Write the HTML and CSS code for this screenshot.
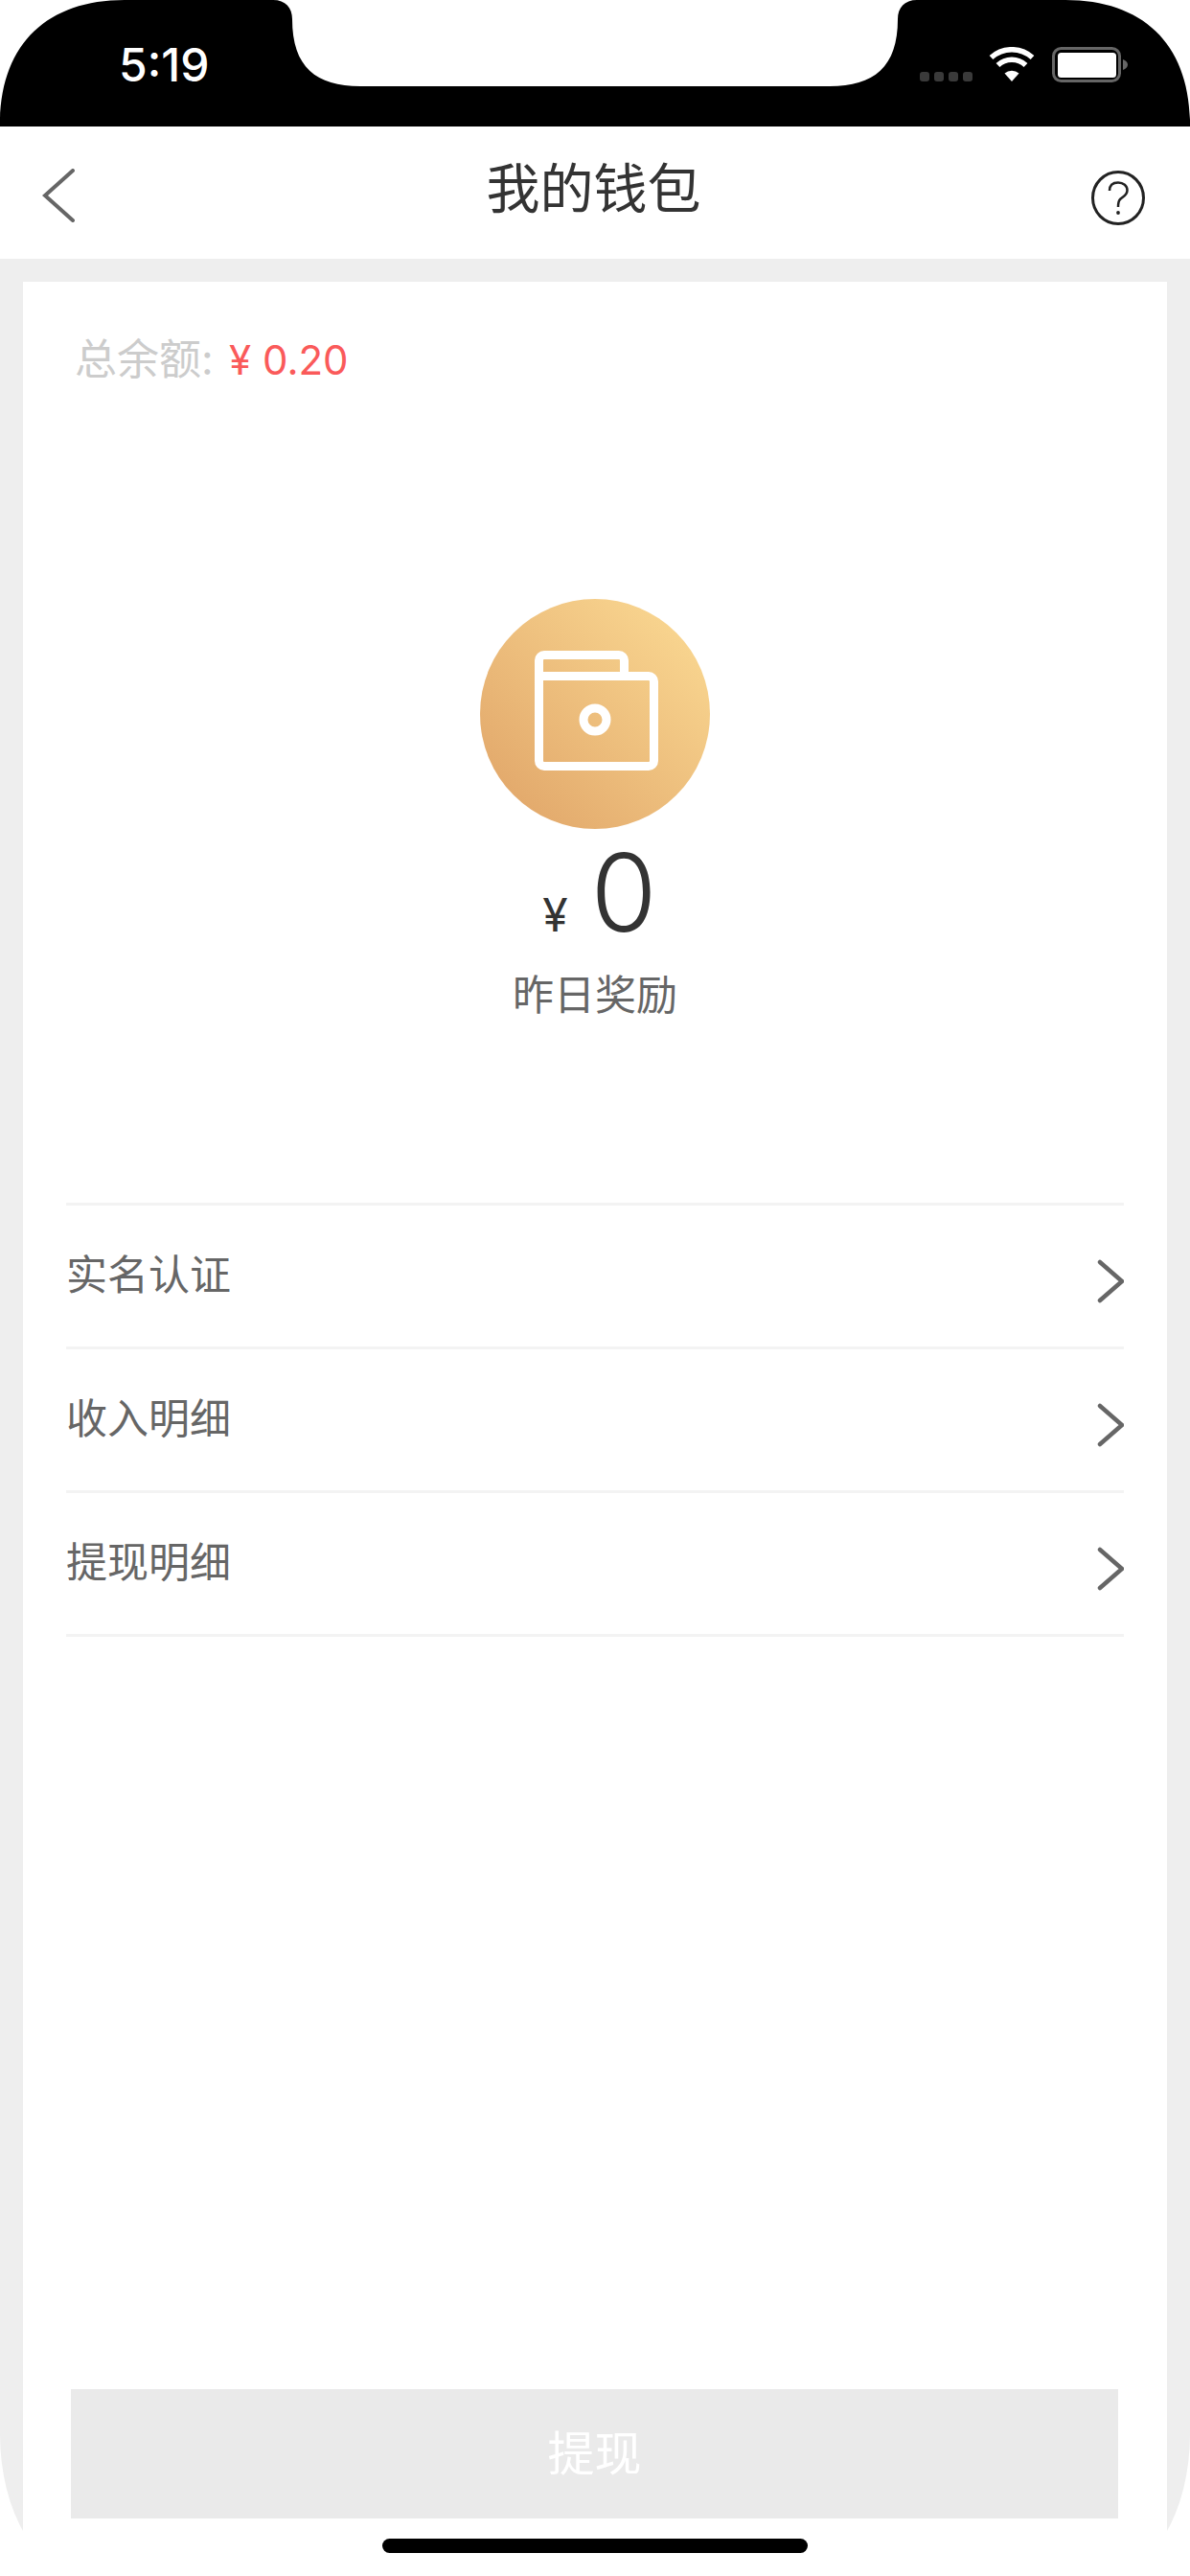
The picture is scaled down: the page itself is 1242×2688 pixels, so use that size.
FILE: index.html
```html
<!DOCTYPE html>
<html lang="zh">
	<head>
		<title>我的钱包</title>
		<meta charset="UTF-8">
		<meta name="viewport" content="width=device-width, initial-scale=1">
		<link rel="stylesheet" href="styles.css">
	</head>
	<body>
		<div id="status">
			<svg class="status-shape" width="1242" height="132" viewBox="0 0 1242 132"><path d="M0 132V125C2 45 50 0 130 0H285C298 0 305 8 305 20C305 70 330 90 376 90H866C912 90 937 70 937 20C937 8 944 0 957 0H1112C1192 0 1240 45 1242 125V132Z"/></svg>
			<span class="time">5:19</span>
			<div class="signal"><i></i><i></i><i></i><i></i></div>
			<svg class="wifi" width="48" height="36" viewBox="0 0 48 36"><path d="M24 36L16.5 27.5A12 12 0 0 1 31.5 27.5Z" fill="#fff"/><path d="M9.5 19A21 21 0 0 1 38.5 19M2.5 11A32 32 0 0 1 45.5 11" fill="none" stroke="#fff" stroke-width="5.5"/></svg>
			<svg class="battery" width="79" height="37" viewBox="0 0 79 37"><rect x="1.5" y="1.5" width="69" height="34" rx="8" fill="none" stroke="#666" stroke-width="3"/><rect x="6" y="6" width="61" height="26" rx="3.5" fill="#fff"/><path d="M74 13C77 14 79 16 79 18.5C79 21 77 23 74 24Z" fill="#666"/></svg>
		</div>
		<div id="nav">
			<svg class="nav-back" width="34" height="56" viewBox="0 0 34 56"><path d="M32 2L3 28L32 54" fill="none" stroke="#666" stroke-width="4" stroke-linecap="round"/></svg>
			<h1>我的钱包</h1>
			<svg class="nav-help" width="56" height="57" viewBox="0 0 56 57"><ellipse cx="28" cy="28.5" rx="26.5" ry="27" fill="none" stroke="#222" stroke-width="3"/><path d="M19 21C19 15 23 12.5 28 12.5C33.5 12.5 37.5 16 37.5 20.5C37.5 26 33 27 30 30C28.5 31.5 28 33 28 38" fill="none" stroke="#222" stroke-width="2.5"/><circle cx="28" cy="44" r="1.9" fill="#222"/></svg>
		</div>
		<div id="page">
			<div id="card">
				<p class="total">总余额: <span class="total-num">¥ 0.20</span></p>
				<div class="hero">
					<div class="hero-icon">
						<svg width="240" height="240" viewBox="0 0 240 240"><path d="M61.5 80.5H176a5.5 5.5 0 0 1 5.5 5.5V169a5.5 5.5 0 0 1 -5.5 5.5H67a5.5 5.5 0 0 1 -5.5 -5.5V64a5.5 5.5 0 0 1 5.5 -5.5H145a5.5 5.5 0 0 1 5.5 5.5V80.5" fill="none" stroke="#fff" stroke-width="9"/><circle cx="120" cy="126" r="12" fill="none" stroke="#fff" stroke-width="9"/></svg>
					</div>
					<div class="amount"><span class="amount-unit">¥</span><span class="amount-num">0</span></div>
					<p class="hero-label">昨日奖励</p>
				</div>
				<div class="menu">
					<div class="menu-row"><span>实名认证</span><svg width="28" height="46" viewBox="0 0 28 46"><path d="M3 3L26 23L3 43" fill="none" stroke="#666" stroke-width="4.5" stroke-linecap="round"/></svg></div>
					<div class="menu-row"><span>收入明细</span><svg width="28" height="46" viewBox="0 0 28 46"><path d="M3 3L26 23L3 43" fill="none" stroke="#666" stroke-width="4.5" stroke-linecap="round"/></svg></div>
					<div class="menu-row"><span>提现明细</span><svg width="28" height="46" viewBox="0 0 28 46"><path d="M3 3L26 23L3 43" fill="none" stroke="#666" stroke-width="4.5" stroke-linecap="round"/></svg></div>
				</div>
				<div class="withdraw">提现</div>
				<div class="home-bar"></div>
			</div>
		</div>
	</body>
</html>
```
FILE: styles.css
```css
html, body {
	box-sizing: border-box;
	margin: 0;
	padding: 0;
	background-color: #fff;
	font-family: Inter, 'Noto Sans CJK SC', sans-serif;
}

p, h1 {
	margin: 0;
	font-weight: 400;
}

#status {
	position: relative;
	display: flex;
	box-sizing: border-box;
	height: 132px;
	padding: 49px 65px 0 124px;
}

.status-shape {
	position: absolute;
	left: 0;
	top: 0;
}

.time {
	position: relative;
	color: #fff;
	font-size: 48px;
	font-weight: 500;
	line-height: 37px;
}

.signal {
	position: relative;
	display: flex;
	gap: 5px;
	height: 10px;
	margin: 26px 17px 0 auto;
}

.signal i {
	width: 10px;
	height: 10px;
	border-radius: 3px;
	background-color: #3a3a3a;
}

.wifi {
	position: relative;
	margin-right: 18px;
}

.battery {
	position: relative;
}

#nav {
	display: grid;
	grid-template-columns: 1fr auto 1fr;
	box-sizing: border-box;
	height: 138px;
	padding: 0 47px 0 44px;
	align-items: center;
}

#nav h1 {
	color: #333;
	font-size: 56px;
	line-height: 60px;
	margin: 0 0 8px 0;
}

.nav-back {
	margin-top: 6px;
}

.nav-help {
	justify-self: end;
	margin-top: 10px;
}

#page {
	box-sizing: border-box;
	height: 2418px;
	padding: 24px 24px 0;
	background-color: #eee;
	border-radius: 0 0 89px 89px / 0 0 148px 148px;
}

#card {
	display: flex;
	flex-direction: column;
	box-sizing: border-box;
	height: 2394px;
	padding-bottom: 24px;
	background-color: #fff;
}

.total {
	margin: 56px 0 0 54px;
	color: #ccc;
	font-size: 44px;
	line-height: 50px;
}

.total-num {
	margin-left: 4px;
	color: #fa5a5a;
	font-size: 42px;
}

.hero {
	display: flex;
	flex-direction: column;
	align-items: center;
	margin-top: 224px;
}

.hero-icon {
	width: 240px;
	height: 240px;
	border-radius: 50%;
	background: linear-gradient(45deg, #dfa266, #fcdc95);
}

.amount {
	display: flex;
	align-items: baseline;
	height: 120px;
	margin: 6px 0 0 10px;
	color: #333;
	line-height: 120px;
}

.amount-unit {
	margin-right: 24px;
	font-size: 48px;
}

.amount-num {
	font-size: 112px;
	font-weight: 300;
}

.hero-label {
	margin-top: 22px;
	color: #666;
	font-size: 43px;
	line-height: 50px;
}

.menu {
	margin: 192px 45px 0;
	border-bottom: 3px solid #f3f3f3;
}

.menu-row {
	display: flex;
	box-sizing: border-box;
	height: 150px;
	justify-content: space-between;
	align-items: center;
	border-top: 3px solid #f3f3f3;
	color: #666;
	font-size: 43px;
}

.menu-row span {
	margin-bottom: 9px;
}

.menu-row svg {
	margin-top: 11px;
}

.withdraw {
	height: 135px;
	margin: auto 51px 0 50px;
	background-color: #eaeaea;
	color: #fff;
	font-size: 49px;
	line-height: 135px;
	text-align: center;
}

.home-bar {
	align-self: center;
	width: 444px;
	height: 15px;
	margin-top: 21px;
	border-radius: 8px;
	background-color: #000;
}
```
